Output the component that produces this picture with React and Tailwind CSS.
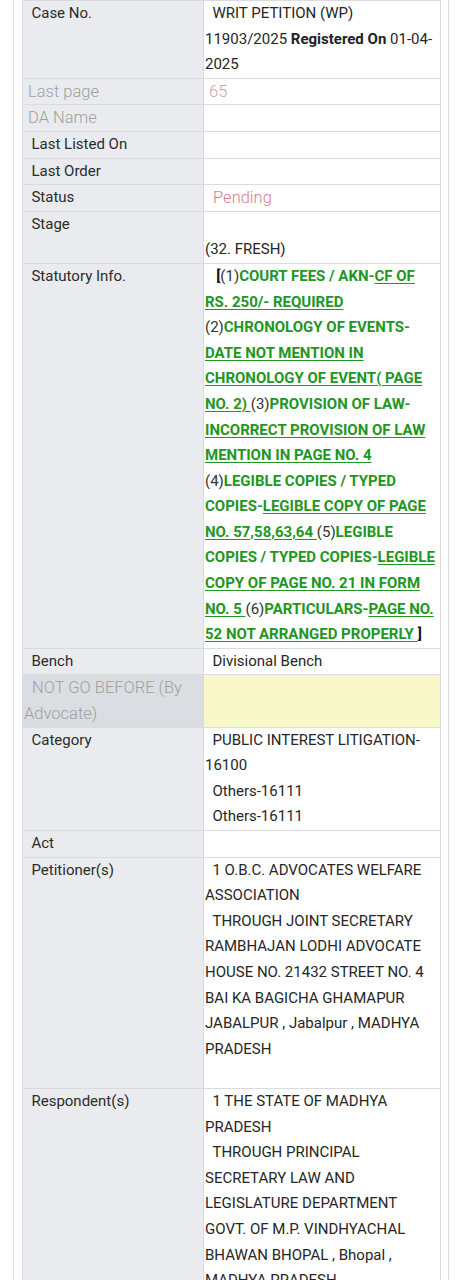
import React from 'react';

const sp = '\u00a0\u00a0';

const Label = ({ children, muted, dark }) => (
  <td
    className={`align-top border border-[#d9dcdf] pl-px pr-1 ${dark ? 'bg-[#dadde1]' : 'bg-[#e9ebee]'} ${muted ? 'text-[#9f9f9f] font-light text-[16.5px]' : 'text-[#2b2b2b]'}`}
  >
    {children}
  </td>
);

const Value = ({ children, className = '' }) => (
  <td className={`align-top border border-[#d9dcdf] pl-px pr-1 ${className || 'text-[#262626]'}`}>{children}</td>
);

const G = ({ children }) => <span className="font-bold text-[#229622]">{children}</span>;
const U = ({ children }) => <span className="font-bold text-[#229622] underline underline-offset-2">{children}</span>;
const N = ({ children }) => <span className="text-[#333]">{children}</span>;

const App = () => {
  return (
    <div className="min-h-screen bg-white" style={{ fontFamily: 'Roboto, "Liberation Sans", sans-serif' }}>
      <div className="ml-[13px] w-[436px] border-x border-[#dcdcdc] px-2 min-h-[1280px]">
        <table className="w-[418px] border-collapse table-fixed text-[15px] leading-[25.6px]">
          <colgroup>
            <col className="w-[181px]" />
            <col className="w-[237px]" />
          </colgroup>
          <tbody>
            <tr>
              <Label>{sp}Case No.</Label>
              <Value>
                {sp}WRIT PETITION (WP) 11903/2025 <b className="font-bold text-[#222]">Registered On</b> 01-04-2025
              </Value>
            </tr>
            <tr>
              <Label muted>{'\u00a0'}Last page</Label>
              <Value className="text-[#d4a0a0] font-light text-[16.5px]">{'\u00a0'}65</Value>
            </tr>
            <tr>
              <Label muted>{'\u00a0'}DA Name</Label>
              <Value></Value>
            </tr>
            <tr>
              <Label>{sp}Last Listed On</Label>
              <Value></Value>
            </tr>
            <tr>
              <Label>{sp}Last Order</Label>
              <Value></Value>
            </tr>
            <tr>
              <Label>{sp}Status</Label>
              <Value className="text-[#db7c90] font-light text-[16.5px]">{sp}Pending</Value>
            </tr>
            <tr>
              <Label>{sp}Stage</Label>
              <Value>
                {sp}
                <br />
                (32. FRESH)
              </Value>
            </tr>
            <tr>
              <Label>{sp}Statutory Info.</Label>
              <Value>
                {sp}{'\u00a0'}<b className="text-[#111]">[</b>
                <N>(1)</N>
                <G>COURT FEES / AKN-</G>
                <U>CF OF RS. 250/- REQUIRED</U> <N>(2)</N>
                <G>CHRONOLOGY OF EVENTS-</G>
                <U>DATE NOT MENTION IN CHRONOLOGY OF EVENT( PAGE NO. 2) </U>
                <N>(3)</N>
                <G>PROVISION OF LAW-</G>
                <U>INCORRECT PROVISION OF LAW MENTION IN PAGE NO. 4</U> <N>(4)</N>
                <G>LEGIBLE COPIES / TYPED COPIES-</G>
                <U>LEGIBLE COPY OF PAGE NO. 57,58,63,64 </U>
                <N>(5)</N>
                <G>LEGIBLE COPIES / TYPED COPIES-</G>
                <U>LEGIBLE COPY OF PAGE NO. 21 IN FORM NO. 5 </U>
                <N>(6)</N>
                <G>PARTICULARS-</G>
                <U>PAGE NO. 52 NOT ARRANGED PROPERLY </U>
                <b className="text-[#111]">]</b>
              </Value>
            </tr>
            <tr>
              <Label>{sp}Bench</Label>
              <Value>{sp}Divisional Bench</Value>
            </tr>
            <tr>
              <Label muted dark>
                {sp}NOT GO BEFORE (By Advocate)
              </Label>
              <Value className="bg-[#f8f8c9]"></Value>
            </tr>
            <tr>
              <Label>{sp}Category</Label>
              <Value>
                {sp}PUBLIC INTEREST LITIGATION-16100
                <br />
                {sp}Others-16111
                <br />
                {sp}Others-16111
              </Value>
            </tr>
            <tr>
              <Label>{sp}Act</Label>
              <Value></Value>
            </tr>
            <tr>
              <Label>{sp}Petitioner(s)</Label>
              <Value>
                {sp}1 O.B.C. ADVOCATES WELFARE ASSOCIATION
                <br />
                {sp}THROUGH JOINT SECRETARY RAMBHAJAN LODHI ADVOCATE HOUSE NO. 21432 STREET NO. 4 BAI KA BAGICHA GHAMAPUR
                JABALPUR , Jabalpur , MADHYA PRADESH
                <br />
                {'\u00a0'}
              </Value>
            </tr>
            <tr>
              <Label>{sp}Respondent(s)</Label>
              <Value>
                {sp}1 THE STATE OF MADHYA PRADESH
                <br />
                {sp}THROUGH PRINCIPAL SECRETARY LAW AND LEGISLATURE DEPARTMENT GOVT. OF M.P. VINDHYACHAL BHAWAN BHOPAL , Bhopal ,
                MADHYA PRADESH
                <br />
                {'\u00a0'}
              </Value>
            </tr>
          </tbody>
        </table>
      </div>
    </div>
  );
};

export default App;
